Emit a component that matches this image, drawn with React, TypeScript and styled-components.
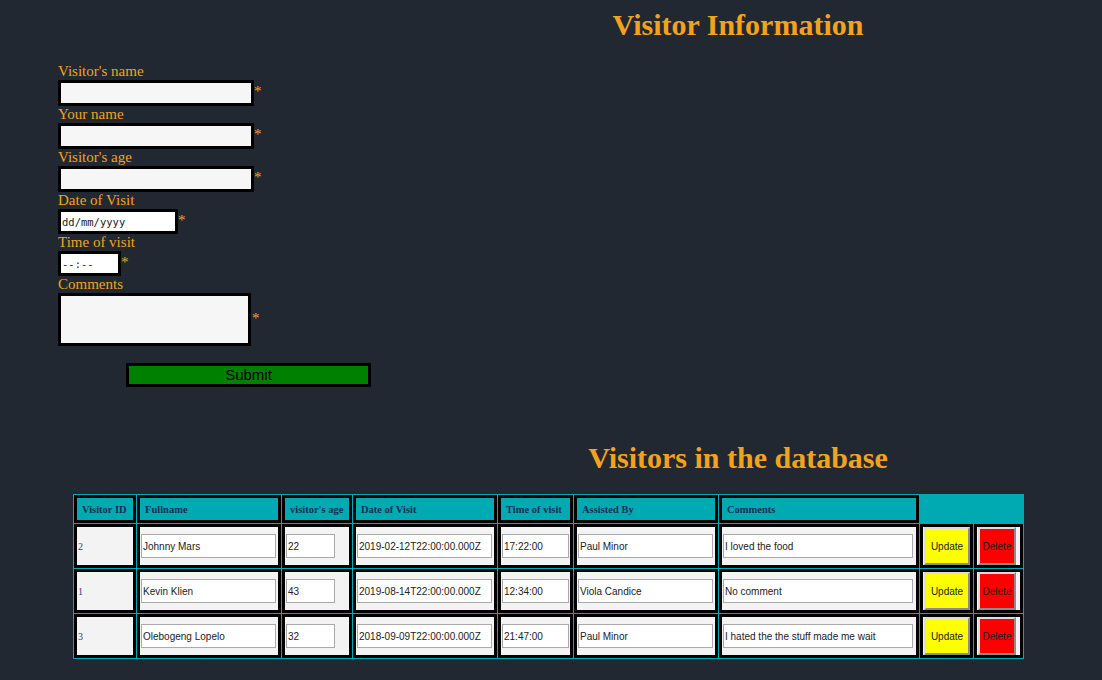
import React from 'react';
import styled, { createGlobalStyle } from 'styled-components';

const GlobalStyle = createGlobalStyle`
  * { box-sizing: border-box; }
  body {
    margin: 8px;
    background: #222831;
    font-family: "Liberation Serif", "Times New Roman", serif;
  }
`;

const ORANGE = '#f3a21f';
const TEAL = '#00aab3';

const Title = styled.h1<{ $top?: number }>`
  margin: ${(p) => p.$top ?? 0}px 0 0 0;
  padding-left: 374px;
  text-align: center;
  font-size: 30px;
  line-height: 34px;
  font-weight: bold;
  color: ${ORANGE};
`;

const Form = styled.form`
  margin: 21px 0 0 50px;
  display: flex;
  flex-direction: column;
`;

const Label = styled.label`
  display: block;
  font-size: 15px;
  line-height: 17px;
  color: ${ORANGE};
`;

const FieldRow = styled.div`
  display: flex;
  align-items: center;
`;

const Required = styled.span<{ $gap?: number }>`
  font-size: 15px;
  line-height: 17px;
  color: ${ORANGE};
  margin-left: ${(p) => p.$gap ?? 0}px;
  margin-bottom: 3px;
`;

const TextBox = styled.input`
  width: 196px;
  height: 26px;
  border: 3px solid #000;
  background: #f6f6f6;
  padding: 0 2px;
  font: 13px "Liberation Sans", Arial, sans-serif;
  outline: none;
`;

const MonoBox = styled.input<{ $w: number }>`
  width: ${(p) => p.$w}px;
  height: 25px;
  border: 3px solid #000;
  background: #fff;
  padding: 0 1px;
  font: 10.5px "DejaVu Sans Mono", monospace;
  color: #222;
  outline: none;
  &::placeholder {
    color: #222;
    opacity: 1;
  }
`;

const CommentBox = styled.textarea`
  display: block;
  width: 193px;
  height: 53px;
  border: 3px solid #000;
  background: #f6f6f6;
  resize: none;
  padding: 2px;
  outline: none;
`;

const SubmitButton = styled.button`
  display: block;
  margin: 17px 0 0 68px;
  width: 245px;
  height: 24px;
  border: 3px solid #000;
  background: #008000;
  color: #000;
  font: 15px "Liberation Sans", Arial, sans-serif;
  line-height: 17px;
  padding: 0 0 1px;
`;

const Table = styled.table`
  margin: 19px 0 0 65px;
  border-collapse: separate;
  border-spacing: 1px;
  background: ${TEAL};
  table-layout: fixed;
  width: 951px;
`;

const Th = styled.th`
  border: 3px solid #000;
  background: ${TEAL};
  color: #18304f;
  font: bold 10.5px "Liberation Serif", "Times New Roman", serif;
  text-align: left;
  padding: 0 0 0 5px;
  height: 28px;
  white-space: nowrap;
`;

const Td = styled.td`
  border: 3px solid #000;
  background: #f3f3f3;
  height: 44px;
  padding: 0 1px;
  vertical-align: middle;
  font: 10px "Liberation Serif", "Times New Roman", serif;
  color: #3b3b62;
`;

const CellInput = styled.input<{ $w: number }>`
  display: block;
  width: ${(p) => p.$w}px;
  height: 24px;
  border: 1px solid #a9a9a9;
  background: #fff;
  padding: 0 1px;
  font: 10px "Liberation Sans", Arial, sans-serif;
  color: #222;
  outline: none;
`;

const ActionButton = styled.button<{ $bg: string; $w: number }>`
  display: block;
  width: ${(p) => p.$w}px;
  height: 38px;
  padding: 0;
  background: ${(p) => p.$bg};
  border: 2px solid;
  border-color: #dcdcdc #8c8c8c #8c8c8c #dcdcdc;
  font: 10px "Liberation Sans", Arial, sans-serif;
  color: #1a1a1a;
`;

type Visitor = {
  id: number;
  name: string;
  age: string;
  date: string;
  time: string;
  assisted: string;
  comment: string;
};

const visitors: Visitor[] = [
  { id: 2, name: 'Johnny Mars', age: '22', date: '2019-02-12T22:00:00.000Z', time: '17:22:00', assisted: 'Paul Minor', comment: 'I loved the food' },
  { id: 1, name: 'Kevin Klien', age: '43', date: '2019-08-14T22:00:00.000Z', time: '12:34:00', assisted: 'Viola Candice', comment: 'No comment' },
  { id: 3, name: 'Olebogeng Lopelo', age: '32', date: '2018-09-09T22:00:00.000Z', time: '21:47:00', assisted: 'Paul Minor', comment: 'I hated the the stuff made me wait' },
];

const colWidths = [62, 144, 70, 144, 75, 144, 200, 53, 49];

export default function App() {
  return (
    <>
      <GlobalStyle />
      <Title>Visitor Information</Title>
      <Form onSubmit={(e) => e.preventDefault()}>
        <Label>Visitor's name</Label>
        <FieldRow>
          <TextBox type="text" />
          <Required>*</Required>
        </FieldRow>
        <Label>Your name</Label>
        <FieldRow>
          <TextBox type="text" />
          <Required>*</Required>
        </FieldRow>
        <Label>Visitor's age</Label>
        <FieldRow>
          <TextBox type="text" />
          <Required>*</Required>
        </FieldRow>
        <Label>Date of Visit</Label>
        <FieldRow>
          <MonoBox $w={120} type="text" placeholder="dd/mm/yyyy" />
          <Required>*</Required>
        </FieldRow>
        <Label>Time of visit</Label>
        <FieldRow>
          <MonoBox $w={63} type="text" placeholder="--:--" />
          <Required>*</Required>
        </FieldRow>
        <Label>Comments</Label>
        <FieldRow>
          <CommentBox />
          <Required $gap={1}>*</Required>
        </FieldRow>
        <SubmitButton type="submit">Submit</SubmitButton>
      </Form>
      <Title $top={54}>Visitors in the database</Title>
      <Table>
        <colgroup>
          {colWidths.map((w, i) => (
            <col key={i} style={{ width: w }} />
          ))}
        </colgroup>
        <thead>
          <tr>
            <Th>Visitor ID</Th>
            <Th>Fullname</Th>
            <Th>visitor's age</Th>
            <Th>Date of Visit</Th>
            <Th>Time of visit</Th>
            <Th>Assisted By</Th>
            <Th>Comments</Th>
          </tr>
        </thead>
        <tbody>
          {visitors.map((v) => (
            <tr key={v.id}>
              <Td>{v.id}</Td>
              <Td><CellInput $w={135} defaultValue={v.name} /></Td>
              <Td><CellInput $w={49} defaultValue={v.age} /></Td>
              <Td><CellInput $w={135} defaultValue={v.date} /></Td>
              <Td><CellInput $w={67} defaultValue={v.time} /></Td>
              <Td><CellInput $w={135} defaultValue={v.assisted} /></Td>
              <Td><CellInput $w={190} defaultValue={v.comment} /></Td>
              <Td><ActionButton $bg="#ffff00" $w={46}>Update</ActionButton></Td>
              <Td><ActionButton $bg="#ff0000" $w={38}>Delete</ActionButton></Td>
            </tr>
          ))}
        </tbody>
      </Table>
    </>
  );
}
